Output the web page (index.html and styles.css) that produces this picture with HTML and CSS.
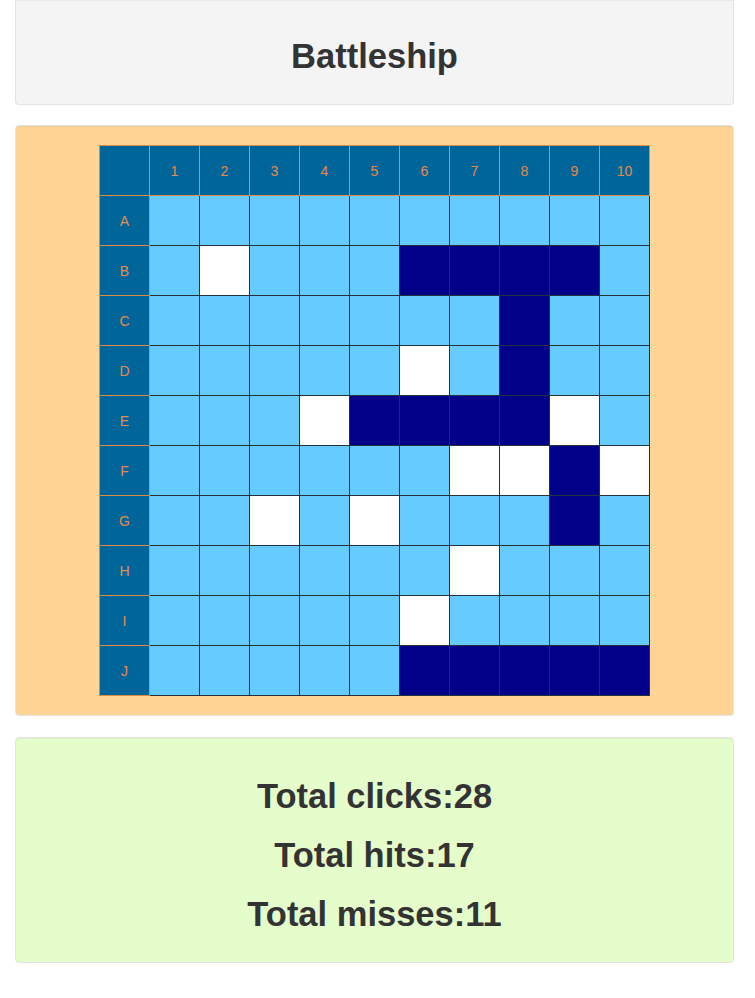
FILE: index.html
```html
<!DOCTYPE html>
<html lang="en">
<head>
  <meta charset="UTF-8" />
  <title>Battleship</title>
  <link rel="stylesheet" href="styles.css">
</head>
<body>

  <div class="container">
    <div class="well title-well">
      <h1>Battleship</h1>
    </div>

    <div class="well board-well">
      <table class="board">
        <tr class="head-row">
          <th></th>
          <th>1</th><th>2</th><th>3</th><th>4</th><th>5</th>
          <th>6</th><th>7</th><th>8</th><th>9</th><th>10</th>
        </tr>
        <tr>
          <th>A</th>
          <td></td><td></td><td></td><td></td><td></td>
          <td></td><td></td><td></td><td></td><td></td>
        </tr>
        <tr>
          <th>B</th>
          <td></td><td class="miss"></td><td></td><td></td><td></td>
          <td class="hit"></td><td class="hit"></td><td class="hit"></td><td class="hit"></td><td></td>
        </tr>
        <tr>
          <th>C</th>
          <td></td><td></td><td></td><td></td><td></td>
          <td></td><td></td><td class="hit"></td><td></td><td></td>
        </tr>
        <tr>
          <th>D</th>
          <td></td><td></td><td></td><td></td><td></td>
          <td class="miss"></td><td></td><td class="hit"></td><td></td><td></td>
        </tr>
        <tr>
          <th>E</th>
          <td></td><td></td><td></td><td class="miss"></td><td class="hit"></td>
          <td class="hit"></td><td class="hit"></td><td class="hit"></td><td class="miss"></td><td></td>
        </tr>
        <tr>
          <th>F</th>
          <td></td><td></td><td></td><td></td><td></td>
          <td></td><td class="miss"></td><td class="miss"></td><td class="hit"></td><td class="miss"></td>
        </tr>
        <tr>
          <th>G</th>
          <td></td><td></td><td class="miss"></td><td></td><td class="miss"></td>
          <td></td><td></td><td></td><td class="hit"></td><td></td>
        </tr>
        <tr>
          <th>H</th>
          <td></td><td></td><td></td><td></td><td></td>
          <td></td><td class="miss"></td><td></td><td></td><td></td>
        </tr>
        <tr>
          <th>I</th>
          <td></td><td></td><td></td><td></td><td></td>
          <td class="miss"></td><td></td><td></td><td></td><td></td>
        </tr>
        <tr>
          <th>J</th>
          <td></td><td></td><td></td><td></td><td></td>
          <td class="hit"></td><td class="hit"></td><td class="hit"></td><td class="hit"></td><td class="hit"></td>
        </tr>
      </table>
    </div>

    <div class="well stats-well">
      <h1>Total clicks:28</h1>
      <h1>Total hits:17</h1>
      <h1>Total misses:11</h1>
    </div>
  </div>

</body>
</html>
```

FILE: styles.css
```css
* {
  box-sizing: border-box;
}

body {
  margin: 0;
  padding: 0;
  background: #fff;
  color: #333;
  font-family: "Liberation Sans", Arial, sans-serif;
}

.container {
  padding: 0 21px 0 15px;
}

h1 {
  font-size: 34.5px;
  font-weight: bold;
  line-height: 39px;
  margin: 20px 0 10px;
  text-align: center;
}

.well {
  border: 1px solid #e3e3e3;
  border-radius: 4px;
  padding: 19px;
  margin-bottom: 20px;
  box-shadow: inset 0 1px 1px rgba(0, 0, 0, 0.05);
}

.title-well {
  background: #f4f4f4;
  border-top: none;
  border-radius: 0 0 4px 4px;
  padding: 17px 19px 18px;
  margin-bottom: 20px;
}

.board-well {
  background: #ffd494;
  margin-bottom: 21px;
}

.stats-well {
  background: #e5fdcb;
  padding-bottom: 18px;
}

.board {
  border-collapse: collapse;
  margin: 0 auto;
}

.board th,
.board td {
  width: 50px;
  height: 50px;
  padding: 0;
}

.board th {
  background: #00669a;
  border: 1px solid #e08a45;
  color: #e8894a;
  font-size: 14px;
  font-weight: normal;
  text-align: center;
}

.board td {
  background: #66ccff;
  border: 1px solid #25303d;
}

.board td.hit {
  background: #000088;
}

.board td.miss {
  background: #fff;
}
```
